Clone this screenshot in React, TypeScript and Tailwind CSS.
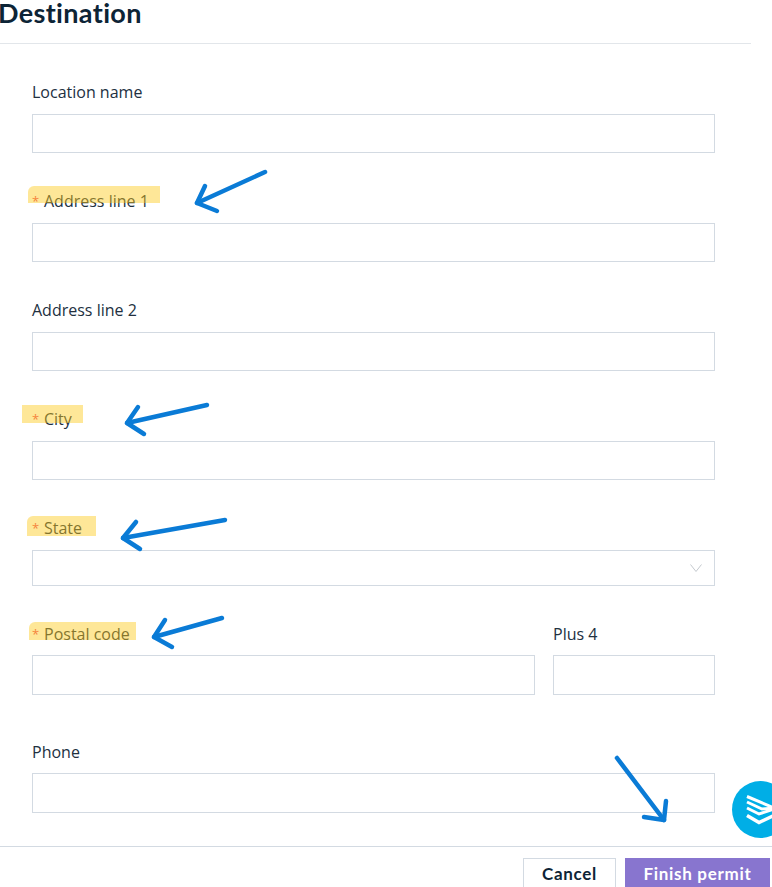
const ARROWS = [
  { line: 'M265 172L197 203', head: 'M205 186L197 203L217 211' },
  { line: 'M207 405L127 423', head: 'M138 407L127 423L144 434' },
  { line: 'M225 520L123 538', head: 'M136 522L123 538L140 549' },
  { line: 'M222 618L154 637', head: 'M165 620L154 637L172 647' },
  { line: 'M617 758L664 820', head: 'M666 801L664 820L644 817' },
]

function Label({ text, required }: { text: string; required?: boolean }) {
  return (
    <label className="flex h-[18px] items-center text-[16px] leading-[18px] text-[#22303f]">
      {required ? <span className="relative z-10 mr-[6px] w-[6px] text-[13px] text-[#f5843c]">*</span> : null}
      {text}
    </label>
  )
}

function Field({ label, required, className }: { label: string; required?: boolean; className: string }) {
  return (
    <div className="flex flex-col">
      <Label text={label} required={required} />
      <div className={`mt-[13px] border border-[#d3dae2] bg-white ${className}`} />
    </div>
  )
}

export default function App() {
  return (
    <div className="relative h-[887px] w-[772px] overflow-hidden bg-white font-['Open_Sans',sans-serif]">
      <header className="mr-[21px] h-[44px] border-b border-[#e2e6ea]">
        <h1 className="-ml-[2px] font-['Lato',sans-serif] text-[27px] font-bold leading-[26px] tracking-[0.35px] text-[#0d2436]">
          Destination
        </h1>
      </header>

      <form className="ml-[32px] mr-[57px] flex flex-col pt-[39px]">
        <Field label="Location name" className="h-[39px]" />
        <div className="mt-[39px]">
          <Field label="Address line 1" required className="h-[39px]" />
        </div>
        <div className="mt-[39px]">
          <Field label="Address line 2" className="h-[39px]" />
        </div>
        <div className="mt-[39px]">
          <Field label="City" required className="h-[39px]" />
        </div>
        <div className="mt-[39px] flex flex-col">
          <Label text="State" required />
          <div className="mt-[13px] flex h-[36px] items-center justify-end border border-[#d3dae2] pr-[12px]">
            <svg width="12" height="8" viewBox="0 0 12 8" fill="none" stroke="#c4c9ce" strokeWidth="1">
              <path d="M0.5 0.5L6 7.5L11.5 0.5" />
            </svg>
          </div>
        </div>
        <div className="mt-[39px] flex gap-[18px]">
          <div className="w-[503px]">
            <Label text="Postal code" required />
            <div className="mt-[12px] h-[40px] border border-[#d3dae2] bg-white" />
          </div>
          <div className="w-[162px]">
            <Label text="Plus 4" />
            <div className="mt-[12px] h-[40px] border border-[#d3dae2] bg-white" />
          </div>
        </div>
        <div className="mt-[48px]">
          <div className="flex flex-col">
            <Label text="Phone" />
            <div className="mt-[12px] h-[40px] border border-[#d3dae2] bg-white" />
          </div>
        </div>
      </form>

      <footer className="absolute bottom-0 left-0 right-0 flex h-[41px] items-start justify-end gap-[9px] border-t border-[#d3dae2] pr-[2px] pt-[11px] font-['Lato',sans-serif] text-[17px] font-bold tracking-[0.7px]">
        <button className="h-[40px] w-[93px] border border-[#d3dae2] bg-white pb-[8px] text-[#0d2436]">Cancel</button>
        <button className="h-[40px] w-[145px] bg-[#8875cf] pb-[8px] text-white">Finish permit</button>
      </footer>

      {/* highlighter marks drawn on the screenshot */}
      <div className="absolute left-[28px] top-[186px] h-[17px] w-[132px] rounded-tl-[6px] bg-[#fdc91a]/45" />
      <div className="absolute left-[22px] top-[405px] h-[18px] w-[61px] bg-[#fdc91a]/45" />
      <div className="absolute left-[27px] top-[516px] h-[20px] w-[69px] rounded-tl-[6px] bg-[#fdc91a]/45" />
      <div className="absolute left-[29px] top-[622px] h-[18px] w-[107px] rounded-tl-[6px] bg-[#fdc91a]/45" />

      <svg className="absolute inset-0 z-20" width="772" height="887" fill="none" stroke="#0a7bd6" strokeWidth="4.5" strokeLinecap="round" strokeLinejoin="round">
        {ARROWS.map((a) => (
          <g key={a.line}>
            <path d={a.line} />
            <path d={a.head} />
          </g>
        ))}
      </svg>

      {/* chat bubble */}
      <div className="absolute left-[732px] top-[781px] flex h-[57px] w-[57px] rounded-full bg-[#00aee6] pl-[14px] pt-[14px]">
        <svg width="28" height="32" viewBox="0 0 28 32" fill="none" stroke="#fff" strokeWidth="3">
          <path d="M1 1.5L28 13" />
          <path d="M1 7L16 14L28 13" />
          <path d="M1 13L13 19L28 14" />
          <path d="M1 20.5L13 27.5L28 20.5" strokeWidth="3.5" />
        </svg>
      </div>
    </div>
  )
}
